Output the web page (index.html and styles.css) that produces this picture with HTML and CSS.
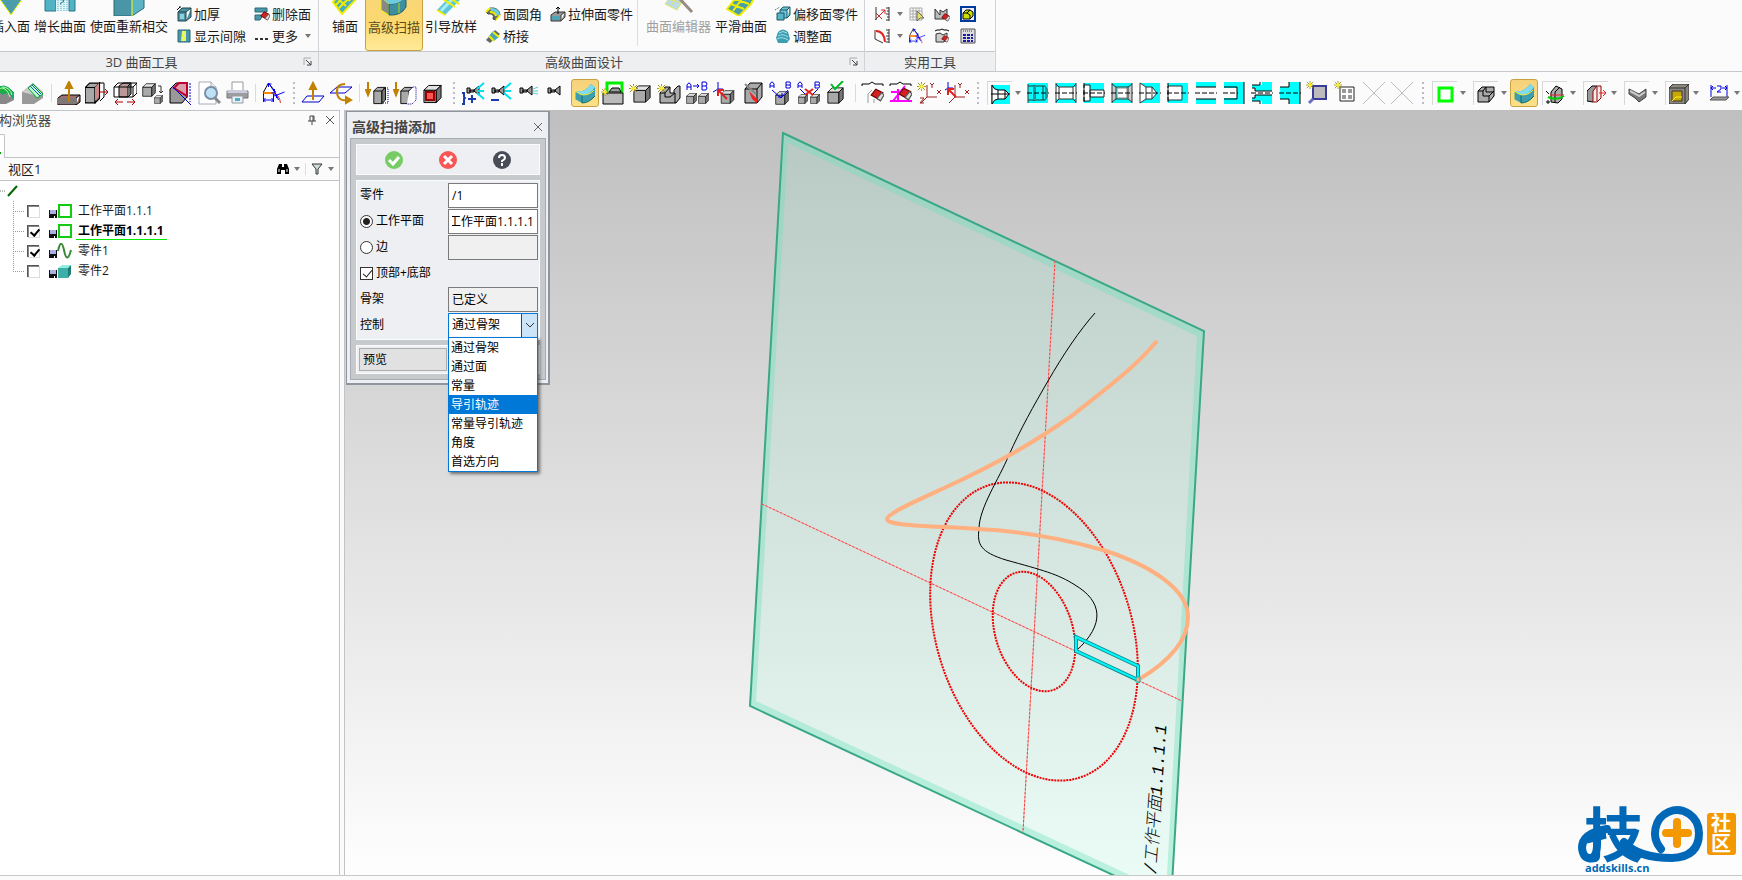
FILE: index.html
```html
<!DOCTYPE html>
<html lang="zh-CN">
<head>
    <meta charset="UTF-8">
    <meta name="viewport" content="width=device-width, initial-scale=1.0">
    <title>高级扫描添加</title>
    <link rel="stylesheet" href="styles.css">
</head>
<body>
    <!-- shared icon parts -->
    <svg class="sprite" width="0" height="0" aria-hidden="true">
        <symbol id="box" viewBox="0 0 20 20">
            <path d="M1 6h13v13H1z" fill="#a9a9a9" stroke="#000"/>
            <path d="M1 6l5-5h13l-5 5z" fill="#e2e2e2" stroke="#000"/>
            <path d="M14 6l5-5v13l-5 5z" fill="#777" stroke="#000"/>
        </symbol>
        <symbol id="tall" viewBox="0 0 20 20">
            <path d="M2 5l4-4h9l-4 4v14H2z" fill="#a9a9a9" stroke="#000"/>
            <path d="M11 5l4-4v14l-4 4z" fill="#777" stroke="#000"/>
            <path d="M2 5h9" stroke="#000"/>
        </symbol>
        <symbol id="star" viewBox="0 0 10 10">
            <path d="M5 0v10M0 5h10M1 1l8 8M9 1L1 9" stroke="#8a8a20" fill="none"/>
            <path d="M5 2v6M2 5h6" stroke="#ffee30" stroke-width="2"/>
        </symbol>
        <symbol id="sweep" viewBox="0 0 24 24">
            <path d="M2 10q10 2 16-7l4 3v9q-6 7-13 7l-7-4z" fill="#3f9db0"/>
            <path d="M2 10q10 2 16-7l4 3q-5 8-13 8z" fill="#7fdcec"/>
            <path d="M2 10l7 4q8 0 12-5M2 10v8" fill="none" stroke="#ffee30"/>
            <path d="M9 14v8q7 0 13-7" fill="none" stroke="#107060"/>
        </symbol>
        <symbol id="eraser" viewBox="0 0 12 12">
            <path d="M1 6l4-5 6 3-3 6z" fill="#d42020" stroke="#600"/>
            <path d="M6 9l4-5 2 2-3 5z" fill="#ddd" stroke="#555"/>
        </symbol>
        <symbol id="lamp" viewBox="0 0 24 24">
            <path d="M3 10h3v5H3zM6 12h4v2H6zM10 12l5-4v9l-5-4z" fill="#999" stroke="#000"/>
        </symbol>
        <symbol id="angle" viewBox="0 0 22 22">
            <path d="M1 20V10L6 1l7 9" fill="none" stroke="#000"/>
            <path d="M1 11h9q7 1 8 10" stroke="#c33" fill="none"/>
            <path d="M1 11h11" stroke="#f80" stroke-width="2"/>
            <path d="M12 14l10-4M12 9l4 9M1 20v-7M11 20v-8M1 18h10M3 16l-2 2 2 2M9 16l2 2-2 2M6 1l6 9M6 5V2h3M12 7v4H9M14 16v-3h-3" stroke="#00f" fill="none"/>
        </symbol>
        <symbol id="caret" viewBox="0 0 6 4"><path d="M0 0h6L3 4z" fill="#777"/></symbol>
        <symbol id="launch" viewBox="0 0 9 9">
            <path d="M1 8V1h7" fill="none" stroke="#aaa"/><path d="M3 3l5 5M8 4v4H4" fill="none" stroke="#444"/>
        </symbol>
        <symbol id="disk" viewBox="0 0 8 8">
            <path d="M0 0h8v8H0z" fill="#111"/><path d="M1 0h6v4H1z" fill="#aab0e0"/><path d="M5 6h1v2H5z" fill="#fff"/>
        </symbol>
    </svg>

    <div class="app">
        <header class="ribbon">
            <section class="group group-surface">
                <div class="group-body">
                    <button class="large cut">
                        <svg class="icon-lg" viewBox="0 0 32 32"><path d="M4 14h24L16 31z" fill="#4b9dac" stroke="#ff0"/></svg>
                        <span>插入面</span>
                    </button>
                    <button class="large">
                        <svg class="icon-lg" viewBox="0 0 32 32"><path d="M1 6h11v21H1zM25 6h6v21h-6z" fill="#52b2c6" stroke="#267888"/><path d="M12 6h12v21H12z" fill="#dff4f8"/><path d="M14 10v17M17 10v17M20 10v17M23 10v17" stroke="#52b2c6" stroke-dasharray="1 1"/><path d="M16 14l4 3-4 3" fill="none" stroke="#267888"/></svg>
                        <span>增长曲面</span>
                    </button>
                    <button class="large">
                        <svg class="icon-lg" viewBox="0 0 32 32"><path d="M1 4h18v28H1z" fill="#4b96a6"/><path d="M19 4h12v20l-12 8z" fill="#5ab4c6"/><path d="M1 4v28h18l12-8V4" fill="none" stroke="#2a6875"/><path d="M19 4v28" stroke="#ff0"/></svg>
                        <span>使面重新相交</span>
                    </button>
                    <div class="small-col">
                        <button class="small"><svg class="icon-sm" viewBox="0 0 16 16"><path d="M2 8h13v8H2z" fill="#a8d4de" stroke="#4b96a6"/></svg></button>
                        <button class="small"><svg class="icon-sm" viewBox="0 0 16 16"><path d="M2 6h8v9H2zM2 6l4-4h9l-5 4M10 15l5-4V2" fill="#4b96a6" stroke="#23424a"/><path d="M4 8h4v5H4z" fill="#8fd0dc"/><path d="M1 4l3-3M3 1h2" stroke="#000"/></svg>加厚</button>
                        <button class="small"><svg class="icon-sm" viewBox="0 0 16 16"><path d="M2 2h12v12H2z" fill="#4b96a6" stroke="#2a6875"/><path d="M6 3h4v10H5z" fill="#c6e9ef"/><path d="M8 3L7 8l1 2-1 3" stroke="#ff0" stroke-width="2" fill="none"/></svg>显示间隙</button>
                    </div>
                    <div class="small-col">
                        <button class="small"><svg class="icon-sm" viewBox="0 0 16 16"><path d="M1 2h12v4H1zM1 9h8l-3 5H1z" fill="#4b96a6" stroke="#2a6875"/><use href="#eraser" x="6" y="5" width="10" height="10"/></svg>删除面</button>
                        <button class="small"><svg class="icon-sm" viewBox="0 0 16 16"><path d="M1 10h3v2H1zM6 10h3v2H6zM11 10h3v2h-3z" fill="#333"/></svg>更多 <svg class="caret"><use href="#caret"/></svg></button>
                    </div>
                </div>
                <div class="group-title"><span>3D 曲面工具</span><svg class="launch"><use href="#launch"/></svg></div>
            </section>

            <section class="group group-advanced">
                <div class="group-body">
                    <button class="large first">
                        <svg class="icon-lg" viewBox="0 0 32 32"><path d="M4 18l12-14 14 8-17 18z" fill="#4baabb"/><path d="M4 18l12-14 14 8-17 18zM7 21L20 6M10 24L25 9M8 14l9 8M12 10l9 7" fill="none" stroke="#ee0" stroke-width="2"/></svg>
                        <span>铺面</span>
                    </button>
                    <button class="large active">
                        <svg class="icon-lg" viewBox="0 0 32 32"><path d="M3 12l8 7v11l-8-5z" fill="#888" stroke="#ee0"/><path d="M11 19q10 1 17-8v11q-5 9-17 8z" fill="#3f8fa0" stroke="#176070"/><path d="M3 12q12 0 20-8l5 7q-6 9-17 8z" fill="#6ccbdc"/><path d="M21 18v10" stroke="#ad0"/></svg>
                        <span>高级扫描</span>
                    </button>
                    <button class="large">
                        <svg class="icon-lg" viewBox="0 0 32 32"><path d="M2 26L24 3l8 6L10 31z" fill="#5cc6da"/><path d="M6 27L26 6" stroke="#a8ecf5" stroke-width="3"/><path d="M2 26l8 5M8 15l12 8M12 12l12 8" stroke="#ee0" stroke-width="2"/></svg>
                        <span>引导放样</span>
                    </button>
                    <div class="small-col">
                        <button class="small"><svg class="icon-sm" viewBox="0 0 16 16"><path d="M1 6l4-4q9-1 10 7l-4 5-3-1q2-6-5-5z" fill="#666" stroke="#444"/><path d="M5 2q9-1 10 7l-4 1q0-5-5-5z" fill="#6ccbdc"/><path d="M1 6l4-4M11 14l4-5M5 6q5 0 6 4" stroke="#ee0" stroke-width="2" fill="none"/></svg>面圆角</button>
                        <button class="small"><svg class="icon-sm" viewBox="0 0 16 16"><path d="M1 12l4 3 10-9-5-4z" fill="#666"/><path d="M4 8l5 5 5-4-6-6z" fill="#4ba5b5"/><path d="M4 8l5 5M8 4l6 5" stroke="#ee0" stroke-width="2"/></svg>桥接</button>
                    </div>
                    <div class="small-col">
                        <button class="small"><svg class="icon-sm" viewBox="0 0 16 16"><path d="M1 9l4-3h10l-4 3v6H1zM11 15l4-4V6" fill="#999" stroke="#333"/><path d="M2 10h8v4H2z" fill="#4ba5b5"/><path d="M8 8V1M6 3l2-2 2 2" stroke="#000" fill="none"/></svg>拉伸面零件</button>
                        <button class="small"></button>
                    </div>
                    <div class="divider"></div>
                    <button class="large" disabled>
                        <svg class="icon-lg" viewBox="0 0 32 32"><path d="M2 20L12 6l12 4-10 16z" fill="#b8dde6"/><path d="M2 20L12 6l12 4-10 16zM8 22l8-14M5 15l13 4" stroke="#e8e060" fill="none"/><path d="M15 13l14 15" stroke="#998b80" stroke-width="3"/></svg>
                        <span>曲面编辑器</span>
                    </button>
                    <button class="large">
                        <svg class="icon-lg" viewBox="0 0 32 32"><path d="M2 25L17 6l14 5-5 9-12 12z" fill="#4b9dac"/><path d="M2 25L17 6l14 5-5 9-12 12zM8 27L22 8M6 20l13 5M10 15l14 5" stroke="#ee0" stroke-width="2" fill="none"/></svg>
                        <span>平滑曲面</span>
                    </button>
                    <div class="small-col">
                        <button class="small"><svg class="icon-sm" viewBox="0 0 16 16"><path d="M1 8h11v8H1z" fill="#4b96a6"/></svg></button>
                        <button class="small"><svg class="icon-sm" viewBox="0 0 16 16"><path d="M5 4h7v8H5zM5 4l3-3h7l-3 3M12 12l3-3V1" fill="#6cc4d4" stroke="#1d5866"/><path d="M2 7h7v7H2z" fill="#58b4c6" stroke="#1d5866"/><path d="M0 4l5-3" stroke="#1d5866" stroke-dasharray="1 1"/></svg>偏移面零件</button>
                        <button class="small"><svg class="icon-sm" viewBox="0 0 16 16"><path d="M3 4q5-5 10 0l2 7-3 4H3l-2-5z" fill="#3f9db0"/><path d="M4 5q4-3 8 0M3 8q5-3 10 1M2 11q5-3 11 1" stroke="#a0e4ee" fill="none"/></svg>调整面</button>
                    </div>
                </div>
                <div class="group-title"><span>高级曲面设计</span><svg class="launch"><use href="#launch"/></svg></div>
            </section>

            <section class="group group-utils">
                <div class="group-body">
                    <div class="util-grid">
                        <button class="small"></button>
                        <button class="small"></button>
                        <button class="small"><svg class="icon-sm" viewBox="0 0 16 16"><path d="M6 10l3 5" stroke="#00c" stroke-width="3"/></svg></button>
                        <button class="small"><svg class="icon-sm" viewBox="0 0 16 16"><path d="M1 4h14v11H1z" fill="#ddd" stroke="#00c"/></svg></button>

                        <button class="small"><svg class="icon-sm" viewBox="0 0 16 16"><path d="M1 14L11 4M7 4h4v4M2 7l6 6" stroke="#d22" fill="none"/><path d="M2 1v13" stroke="#333"/><path d="M15 1v14M12 2h3M13 5h2M12 8h3M13 11h2M12 14h3" stroke="#333" fill="none"/></svg><svg class="caret"><use href="#caret"/></svg></button>
                        <button class="small"><svg class="icon-sm" viewBox="0 0 16 16"><path d="M1 2h12v12H1zM1 5h12M1 8h12M1 11h12M4 2v12M7 2v12M10 2v12" stroke="#aaa" fill="#fff"/><path d="M8 5v10l3-3h4z" fill="#e8e060" stroke="#666"/></svg></button>
                        <button class="small"><svg class="icon-sm" viewBox="0 0 16 16"><path d="M1 3v10h9l3-4V3l-4 3-3-2v5z" fill="#bbb" stroke="#333"/><use href="#eraser" x="7" y="7" width="9" height="9"/></svg></button>
                        <button class="small"><svg class="icon-sm" viewBox="0 0 16 16"><path d="M1 1h14v14H1z" fill="#eef" stroke="#003a9a" stroke-width="2"/><path d="M3 7l3-3h4l3 2v4l-3 3H3z" fill="#cde000" stroke="#000"/><path d="M3 7h4l3 2v4M7 7l3-3" fill="none" stroke="#000"/></svg></button>

                        <button class="small"><svg class="icon-sm" viewBox="0 0 16 16"><path d="M2 3q8 0 9 11" stroke="#d22" stroke-width="2" fill="none"/><path d="M1 2v9l8 4" stroke="#333" fill="none"/><path d="M15 1v14M12 2h3M13 5h2M12 8h3M13 11h2M12 14h3" stroke="#333" fill="none"/></svg><svg class="caret"><use href="#caret"/></svg></button>
                        <button class="small"><svg class="icon-sm"><use href="#angle" width="16" height="16"/></svg></button>
                        <button class="small"><svg class="icon-sm" viewBox="0 0 16 16"><path d="M1 3l2-1h3l2-1 2 1h3l2 1" fill="none" stroke="#000"/><path d="M2 6v8h8l3-4V5L9 7 6 5z" fill="#ccc" stroke="#333"/><use href="#eraser" x="7" y="7" width="8" height="8"/></svg></button>
                        <button class="small"><svg class="icon-sm" viewBox="0 0 16 16"><path d="M1 1h14v14H1z" fill="#ddd" stroke="#555"/><path d="M3 3h10" stroke="#333" stroke-dasharray="1 1"/><path d="M3 7h10M3 10h10M3 13h10" stroke="#1a1ab0" stroke-width="2" stroke-dasharray="3 1"/></svg></button>
                    </div>
                </div>
                <div class="group-title"><span>实用工具</span></div>
            </section>
        </header>

        <nav class="toolbar">
            <button class="tool cut-left"><svg class="icon" viewBox="0 0 24 24"><path d="M2 12l8-6 11 5v8l-8 4H2z" fill="#888"/><path d="M2 9q9-9 18 2v6q-4-8-10-4z" fill="#20b040" stroke="#0a6"/><path d="M5 8q8-4 12 8M9 6q8 0 10 8" stroke="#b0ffb0" fill="none"/></svg></button>
            <button class="tool"><svg class="icon" viewBox="0 0 24 24"><path d="M1 11L12 2l10 9v6l-9 6H1z" fill="#999"/><path d="M1 11L12 2l10 9-9 3z" fill="#ccc"/><path d="M7 7l5-4 10 10-6 4z" fill="#b8ffc8" stroke="#00a030"/><path d="M9 5l10 10M11 4l9 9" stroke="#2050c0"/></svg></button>
            <span class="sep"></span>
            <button class="tool"><svg class="icon" viewBox="0 0 24 24"><path d="M1 17l4-3h18l-4 3v7H1zM19 24l4-3v-7" fill="#a07070" stroke="#000"/><path d="M1 17h18v6H1z" fill="#807878"/><path d="M12 21V3M9 7l3-6 3 6z" stroke="#c08000" stroke-width="2" fill="#fc3"/></svg></button>
            <button class="tool"><svg class="icon" viewBox="0 0 24 24"><use href="#tall" x="-2" y="1" width="22" height="22"/><path d="M10 6l4-4v14l-4 4z" fill="#c88"/><path d="M14 2h5v14l-4 4" fill="none" stroke="#000"/><path d="M15 11h8M20 8l3 3-3 3" stroke="#b00000" fill="none"/></svg></button>
            <button class="tool"><svg class="icon" viewBox="0 0 24 24"><path d="M6 5l4-3h8l-3 3v11H6z" fill="#b99" stroke="#000"/><path d="M15 5l3-3v11l-3 3" fill="#777" stroke="#000"/><path d="M1 6l4-4h19l-4 4zM1 6v10h19V6M20 16l4-4V2" fill="none" stroke="#000"/><path d="M2 21h8M14 21h8M5 18l-3 3 3 3M19 18l3 3-3 3" stroke="#b00000" fill="none"/></svg></button>
            <button class="tool"><svg class="icon" viewBox="0 0 24 24"><use href="#box" x="1" y="2" width="14" height="14"/><use href="#box" x="13" y="14" width="9" height="9"/><path d="M17 5h3v7M18 10l2 2 2-2" stroke="#333" fill="none"/></svg></button>
            <button class="tool"><svg class="icon" viewBox="0 0 24 24"><path d="M1 8l6-6h11v14l-5 6H1z" fill="#999" stroke="#000"/><path d="M5 7l5-5h8v13z" fill="#d8a0a8" stroke="#c00030" stroke-width="2"/><path d="M3 5l19 19" stroke="#00c"/><path d="M21 2v19" stroke="#00c" stroke-dasharray="2 1"/></svg></button>
            <button class="tool"><svg class="icon" viewBox="0 0 24 24"><path d="M2 1h12l5 5v17H2z" fill="#fff" stroke="#aab"/><path d="M14 1v5h5" fill="#eee" stroke="#aab"/><circle cx="14" cy="12" r="6" fill="#bfe0f5" stroke="#7a8fa5" stroke-width="2"/><path d="M18 17l5 5" stroke="#888" stroke-width="3"/></svg></button>
            <button class="tool"><svg class="icon" viewBox="0 0 24 24"><path d="M7 1h11v9H7z" fill="#fff" stroke="#999"/><path d="M2 10h21v7H2z" fill="#9a9da2" stroke="#777"/><path d="M3 9h18l2 3H2z" fill="#ccd"/><path d="M7 15h11v7H7z" fill="#e6f3ff" stroke="#999"/><path d="M10 17h5v3h-5z" fill="#5ab"/></svg></button>
            <span class="sep"></span>
            <button class="tool"><svg class="icon"><use href="#angle" x="1" y="1" width="23" height="22"/></svg></button>
            <span class="grip"></span>
            <button class="tool"><svg class="icon" viewBox="0 0 24 24"><path d="M1 21l5-6h17l-5 6z" fill="none" stroke="#00c"/><path d="M12 19V4M9 8l3-6 3 6z" stroke="#c08000" stroke-width="2" fill="#fc3"/></svg></button>
            <button class="tool"><svg class="icon" viewBox="0 0 24 24"><path d="M1 12l7-6h15l-7 6z" fill="none" stroke="#00c"/><path d="M16 3q-9 0-8 9t12 7M17 16l5 3-5 3z" fill="none" stroke="#c08000" stroke-width="2"/></svg></button>
            <span class="sep"></span>
            <button class="tool"><svg class="icon" viewBox="0 0 24 24"><use href="#tall" x="7" y="5" width="18" height="19"/><path d="M18 7h5v15h-5" fill="none" stroke="#009" stroke-dasharray="1 1"/><path d="M3 1v12M1 9l2 5 2-5z" stroke="#c08000" stroke-width="2" fill="#fc3"/></svg></button>
            <button class="tool"><svg class="icon" viewBox="0 0 24 24"><use href="#tall" x="6" y="5" width="18" height="19"/><path d="M16 10l4-4h3v13l-4 4h-5" fill="#fff" stroke="#009" stroke-dasharray="1 1"/><path d="M3 1v12M1 9l2 5 2-5z" stroke="#c08000" stroke-width="2" fill="#fc3"/></svg></button>
            <button class="tool"><svg class="icon" viewBox="0 0 24 24"><use href="#box" x="2" y="3" width="19" height="20"/><path d="M5 11h8v8H5z" fill="#f55" stroke="#900" stroke-width="2"/></svg></button>
            <span class="grip"></span>
            <button class="tool"><svg class="icon" viewBox="0 0 24 24"><use href="#lamp" x="3" y="-3" width="24" height="24"/><path d="M16 8l7-6M17 10h6M16 12l7 6" stroke="#00e0f0" stroke-width="2"/><path d="M1 12h2v4l1 1-1 1v5H1M7 18h8M11 14v8" stroke="#1a3ab0" stroke-width="2" fill="none"/></svg></button>
            <button class="tool"><svg class="icon" viewBox="0 0 24 24"><use href="#lamp" x="0" y="-3" width="24" height="24"/><path d="M15 8l7-6M16 10h6M15 12l7 6" stroke="#00e0f0" stroke-width="2"/><path d="M2 19h8" stroke="#1a3ab0" stroke-width="2"/></svg></button>
            <button class="tool"><svg class="icon" viewBox="0 0 24 24"><use href="#lamp" x="0" y="-3" width="24" height="24"/><path d="M16 8l5-2M16 10h5M16 12l5 1" stroke="#50d0d8"/></svg></button>
            <button class="tool"><svg class="icon"><use href="#lamp" x="0" y="-3" width="24" height="24"/></svg></button>
            <button class="tool active"><svg class="icon"><use href="#sweep" width="24" height="24"/></svg></button>
            <button class="tool"><svg class="icon" viewBox="0 0 24 24"><path d="M6 12V2h15v10" fill="none" stroke="#0e0" stroke-width="3"/><path d="M2 12h20v11H2z" fill="#bbb" stroke="#000"/><path d="M8 11l3-4h7l2 4z" fill="#999" stroke="#000"/><use href="#star" x="0" y="7" width="8" height="8"/></svg></button>
            <button class="tool"><svg class="icon"><use href="#box" x="4" y="4" width="18" height="18"/><use href="#star" x="0" y="3" width="9" height="9"/></svg></button>
            <button class="tool"><svg class="icon" viewBox="0 0 24 24"><path d="M3 12l5-6h5v6h4V9l4-4h2v12l-4 5H3z" fill="#aaa" stroke="#000"/><path d="M3 12h5v4h5l5-4M18 12v10M8 12l5-6" fill="none" stroke="#000"/><use href="#star" x="0" y="3" width="9" height="9"/></svg></button>
            <button class="tool"><svg class="icon" viewBox="0 0 24 24"><use href="#box" x="1" y="12" width="11" height="11"/><use href="#box" x="13" y="12" width="11" height="11"/><path d="M2 9V4q2-4 4 0v5M2 6h4M17 1v8h4q2-2 0-4 2-2 0-4zM17 5h4M8 5h6M12 3l2 2-2 2" stroke="#00d" fill="none"/></svg></button>
            <button class="tool"><svg class="icon" viewBox="0 0 24 24"><use href="#box" x="6" y="9" width="17" height="14"/><path d="M5 1v7l-5 3M5 8h5" stroke="#00d" fill="none"/><path d="M14 18L6 10M5 15V9h6" stroke="#d22" stroke-width="2" fill="none"/></svg></button>
            <button class="tool"><svg class="icon" viewBox="0 0 24 24"><path d="M4 8l5-6h12v14l-5 6H4z" fill="#aaa" stroke="#000"/><path d="M16 8l5-6M4 8h12v14" stroke="#000" fill="none"/><path d="M8 10l8 8v4l-5-4z" fill="#e22"/><path d="M4 3l11 10" stroke="#888" stroke-width="2"/></svg></button>
            <button class="tool"><svg class="icon" viewBox="0 0 24 24"><use href="#box" x="5" y="10" width="16" height="14"/><path d="M1 7V3q2-4 4 0v4M1 5h4M17 1v6h4q1-2 0-3 1-2 0-3zM17 4h4M3 9l9 8 7-8M9 16h4v-4" stroke="#00d" fill="none"/></svg></button>
            <button class="tool"><svg class="icon" viewBox="0 0 24 24"><use href="#box" x="1" y="13" width="10" height="10"/><use href="#box" x="13" y="13" width="10" height="10"/><path d="M1 7V3q2-4 4 0v4M1 5h4M18 1v6h4q1-2 0-3 1-2 0-3zM18 4h4M3 8l5 5M21 8l-5 5" stroke="#00d" fill="none"/><path d="M8 8l8 6M16 8l-8 6" stroke="#d22" stroke-width="2"/></svg></button>
            <button class="tool"><svg class="icon" viewBox="0 0 24 24"><use href="#box" x="2" y="6" width="17" height="17"/><path d="M6 3l4 5L18 0" stroke="#0b2" stroke-width="2" fill="none"/></svg></button>
            <span class="sep"></span>
            <button class="tool"><svg class="icon" viewBox="0 0 24 24"><path d="M1 5V3h7l3-2 3 2h8v2" stroke="#000" fill="none"/><use href="#eraser" x="9" y="7" width="14" height="14"/><path d="M7 22v-9l4-4M13 22v-4" stroke="#999" fill="none"/></svg></button>
            <button class="tool"><svg class="icon" viewBox="0 0 24 24"><path d="M1 5V3h7l3-2 3 2h8v2" stroke="#000" fill="none"/><path d="M1 20h22M4 20l12-15M2 11h10M9 8v12" stroke="#f0f" stroke-width="2" fill="none"/><use href="#eraser" x="9" y="6" width="14" height="14"/></svg></button>
            <button class="tool"><svg class="icon" viewBox="0 0 24 24"><path d="M10 4v12h10M10 16l-6 6M13 2l2 2 2-2M15 4v3M20 9l4 4M24 9l-4 4M3 17h4l-4 5h4" stroke="#a02020" fill="none"/><use href="#star" x="0" y="1" width="9" height="9"/></svg></button>
            <button class="tool"><svg class="icon" viewBox="0 0 24 24"><path d="M10 4v12h10M10 16l-6 6M13 2l2 2 2-2M15 4v3M20 9l4 4M24 9l-4 4" stroke="#a02020" fill="none"/><path d="M3 1v6l-3 2M3 7h5" stroke="#00d" fill="none"/><path d="M11 16L4 9M3 14V8h6" stroke="#d22" stroke-width="2" fill="none"/></svg></button>
            <span class="grip"></span>
            <button class="split"><span class="frame"><svg class="icon-sec" viewBox="0 0 20 20"><path d="M0 1h19v19H0z" fill="#0ff"/><path d="M1 1q2 5 6 5h7l4 4-4 5H7q-4 0-6 5z" fill="#fff" stroke="#000"/><path d="M0 10h19M7 6v9M14 6v9" stroke="#000"/></svg></span><svg class="caret"><use href="#caret"/></svg></button>
            <button class="tool"><svg class="icon" viewBox="0 0 24 24"><path d="M2 2h20v20H2z" fill="#0ff"/><path d="M2 3v19M2 5h17l2 3v8l-2 3H2M8 4v16M17 5v14" fill="none" stroke="#333"/><path d="M7 5h3v14H7zM19 5l2 3v8l-2 3z" fill="#1a9a9a"/><path d="M1 12h22" stroke="#000" stroke-dasharray="5 2"/></svg></button>
            <button class="tool"><svg class="icon" viewBox="0 0 24 24"><path d="M2 2h20v4H2zM2 18h20v4H2z" fill="#0ff"/><path d="M5 6h14v12H5zM5 6L2 3M19 6l3-3M5 18l-3 3M19 18l3 3M2 2v20M22 2v20" fill="#fff" stroke="#333"/><path d="M1 12h22" stroke="#000" stroke-dasharray="5 2"/></svg></button>
            <button class="tool"><svg class="icon" viewBox="0 0 24 24"><path d="M2 2h20v20H2z" fill="#0ff"/><path d="M2 4h6v16H2zM8 9h14v7H8z" fill="#fff" stroke="#222"/><path d="M1 12h22M2 2v20" stroke="#000" stroke-dasharray="5 2"/></svg></button>
            <button class="tool"><svg class="icon" viewBox="0 0 24 24"><path d="M2 2h20v20H2z" fill="#0ff"/><path d="M2 4l4 3v11l-4 3zM22 4l-4 3v11l4 3z" fill="#ccc"/><path d="M2 3l4 3h12l4-3M2 21l4-3h12l4 3M2 2v20M22 2v20M6 6v12M18 6v12" fill="none" stroke="#333"/><path d="M7 7h10v10H7z" fill="#fff" stroke="#888"/><path d="M1 12h22" stroke="#000" stroke-dasharray="5 2"/></svg></button>
            <button class="tool"><svg class="icon" viewBox="0 0 24 24"><path d="M2 2h20v20H2z" fill="#0ff"/><path d="M2 2v20l6-4h6l5-6-5-6H8z" fill="#fff" stroke="#333"/><path d="M8 6v12M14 6v12" stroke="#333"/><path d="M1 12h22" stroke="#000" stroke-dasharray="5 2"/></svg></button>
            <button class="tool"><svg class="icon" viewBox="0 0 24 24"><path d="M2 2h20v20H2z" fill="#0ff"/><path d="M2 5h14v14H2z" fill="#fff" stroke="#333"/><path d="M1 12h22M2 2v20" stroke="#000" stroke-dasharray="5 2"/></svg></button>
            <button class="tool"><svg class="icon" viewBox="0 0 24 24"><path d="M2 1h20v5H2zM2 18h20v5H2z" fill="#0ff"/><path d="M2 6h20M2 18h20" stroke="#000"/><path d="M1 12h22" stroke="#000" stroke-dasharray="5 2"/></svg></button>
            <button class="tool"><svg class="icon" viewBox="0 0 24 24"><path d="M2 1h20v22H2z" fill="#0ff"/><path d="M0 7h15v10H0z" fill="#fbfbfb"/><path d="M2 6h13v12H2M22 1v22" fill="none" stroke="#000"/><path d="M1 12h15" stroke="#000" stroke-dasharray="5 2"/></svg></button>
            <button class="tool"><svg class="icon" viewBox="0 0 24 24"><path d="M2 4h10V1h10v9H5V7H2zM2 20h10v3h10v-9H5v3H2z" fill="#0ff"/><path d="M2 4h8V1M22 10H5V7H2M2 20h8v3M2 17h3v-3h17" fill="none" stroke="#000"/><path d="M1 12h22" stroke="#000" stroke-dasharray="5 2"/></svg></button>
            <button class="tool"><svg class="icon" viewBox="0 0 24 24"><path d="M2 6h9V1h11v22H11v-5H2z" fill="#0ff"/><path d="M2 6h9V1M2 18h9v5M22 1v22" fill="none" stroke="#000"/><path d="M1 12h22" stroke="#000" stroke-dasharray="5 2"/></svg></button>
            <button class="tool"><svg class="icon" viewBox="0 0 24 24"><path d="M7 5h13v13H7z" fill="#bbb" stroke="#3a3a9a" stroke-width="2"/><path d="M7 18l-4 4" stroke="#6a70c0" stroke-width="3"/><use href="#star" x="0" y="0" width="8" height="8"/></svg></button>
            <button class="tool"><svg class="icon" viewBox="0 0 24 24"><path d="M6 6h14v14H6z" fill="#fff" stroke="#222"/><path d="M8 8h4v4H8zM14 8h4v4h-4zM8 14h4v4H8zM14 14h4v4h-4z" fill="#999"/><use href="#star" x="0" y="0" width="8" height="8"/></svg></button>
            <button class="tool" disabled><svg class="icon" viewBox="0 0 24 24"><path d="M1 1l22 22M23 1L1 23" stroke="#bbb"/></svg></button>
            <button class="tool" disabled><svg class="icon" viewBox="0 0 24 24"><path d="M1 1l22 22M23 1L1 23" stroke="#bbb"/></svg></button>
            <span class="grip"></span>
            <button class="split"><span class="frame"><svg class="icon-sec" viewBox="0 0 20 20"><path d="M3 4h13v13H3z" fill="#fff" stroke="#0f0" stroke-width="3"/></svg></span><svg class="caret"><use href="#caret"/></svg></button>
            <button class="split"><span class="frame"><svg class="icon-sec" viewBox="0 0 20 20"><path d="M1 7l4-4h12v9l-5 6H1z" fill="#aaa" stroke="#000"/><path d="M1 7h5v5h6v6M6 7l3-4M12 12l5-5M9 8h7M9 8V3" fill="none" stroke="#000"/></svg></span><svg class="caret"><use href="#caret"/></svg></button>
            <button class="tool active"><svg class="icon"><use href="#sweep" width="24" height="24"/></svg></button>
            <button class="split"><span class="frame"><svg class="icon-sec" viewBox="0 0 20 20"><path d="M5 18V8l5-6 6 3v10l-4 4z" fill="#aaa" stroke="#000"/><path d="M9 18V8l5-5" stroke="#000" fill="none"/><path d="M4 11h14" stroke="#e22"/><path d="M2 13q8 4 16-1" stroke="#0c0" stroke-width="2" fill="none"/><path d="M0 7l3 3M2 16v4M0 18h4" stroke="#000"/></svg></span><svg class="caret"><use href="#caret"/></svg></button>
            <button class="split"><span class="frame"><svg class="icon-sec" viewBox="0 0 20 20"><path d="M0 17V7l5-5h5v11l-4 5z" fill="#999" stroke="#000"/><path d="M6 18V7l4-5h4v12l-4 4z" fill="#fbeaea" stroke="#900"/><path d="M10 3v14" stroke="#900"/><path d="M12 9h7M16 6l3 3-3 3" stroke="#e22" fill="none"/></svg></span><svg class="caret"><use href="#caret"/></svg></button>
            <button class="split"><span class="frame"><svg class="icon-sec" viewBox="0 0 20 20"><path d="M1 5l6 3 4 2 7-5v8l-7 5-4-4-6-4z" fill="#777" stroke="#444"/><path d="M2 7q6 3 9 5l6-4" stroke="#ccc" stroke-width="2" fill="none"/></svg></span><svg class="caret"><use href="#caret"/></svg></button>
            <button class="split"><span class="frame"><svg class="icon-sec" viewBox="0 0 20 20"><path d="M0 4l4-4h16v15l-4 5H0z" fill="#8b8680" stroke="#333"/><path d="M0 4h16v16M16 4l4-4" stroke="#333" fill="none"/><path d="M3 7h10v10H3z" fill="#c8a800" stroke="#333"/><path d="M3 17l4-4h6" stroke="#fe3" fill="none"/></svg></span><svg class="caret"><use href="#caret"/></svg></button>
            <button class="split"><span class="frame plain"><svg class="icon-sec" viewBox="0 0 20 20"><path d="M1 1v12M17 1v12M1 4h5M12 4h5M3 2L1 4l2 2M15 2l2 2-2 2M7 2h4v3L7 8h4" stroke="#00d" fill="none"/><path d="M0 16l3-3h16l-3 3z" fill="#999" stroke="#555"/></svg></span><svg class="caret"><use href="#caret"/></svg></button>
        </nav>

        <main class="work">
            <aside class="browser">
                <div class="browser-title">
                    <h2>构浏览器</h2>
                    <svg class="pin" viewBox="0 0 10 10"><path d="M1 6h8M3 6V1h4v5M5 6v4M6 1v5" fill="none" stroke="#444"/></svg>
                    <svg class="close" viewBox="0 0 8 8"><path d="M0 0l8 8M8 0L0 8" stroke="#555"/></svg>
                </div>
                <div class="tabs"><span class="tab"></span></div>
                <div class="view-bar">
                    <span>视区1</span>
                    <svg class="find" viewBox="0 0 12 12"><path d="M2 1h3v3h2V1h3l2 5v5H8V7H4v4H0V6z" fill="#000"/><path d="M2 6v3M10 6v3" stroke="#fff"/></svg>
                    <svg class="caret"><use href="#caret"/></svg>
                    <span class="bar-sep"></span>
                    <svg class="find" viewBox="0 0 12 12"><path d="M1 1h10L7 6v5H5V6z" fill="#cdd" stroke="#333"/></svg>
                    <svg class="caret"><use href="#caret"/></svg>
                </div>
                <div class="tree">
                    <div class="root"><svg viewBox="0 0 18 12"><path d="M0 6h5" stroke="#777" stroke-dasharray="1 1"/><path d="M8 11L17 1" stroke="#060" stroke-width="2"/></svg></div>
                    <ul>
                        <li>
                            <input type="checkbox" id="wp1">
                            <svg class="node" viewBox="0 0 24 16"><use href="#disk" x="1" y="7" width="8" height="8"/><path d="M11 2h12v12H11z" fill="#fff" stroke="#1c1" stroke-width="2"/></svg>
                            <label for="wp1">工作平面1.1.1</label>
                        </li>
                        <li>
                            <input type="checkbox" id="wp2" checked>
                            <svg class="node" viewBox="0 0 24 16"><use href="#disk" x="1" y="7" width="8" height="8"/><path d="M11 2h12v12H11z" fill="#fff" stroke="#1c1" stroke-width="2"/></svg>
                            <label for="wp2" class="current">工作平面1.1.1.1</label>
                        </li>
                        <li>
                            <input type="checkbox" id="part1" checked>
                            <svg class="node" viewBox="0 0 24 16"><use href="#disk" x="1" y="7" width="8" height="8"/><path d="M10 8Q13-6 16 7Q19 22 23 7" fill="none" stroke="#3a8a3a" stroke-width="2"/></svg>
                            <label for="part1">零件1</label>
                        </li>
                        <li>
                            <input type="checkbox" id="part2">
                            <svg class="node" viewBox="0 0 24 16"><use href="#disk" x="1" y="7" width="8" height="8"/><path d="M10 5h10v10H10z" fill="#3cb0a8"/><path d="M10 5l4-3h9l-3 3z" fill="#8ff0dc"/><path d="M20 5l3-3v9l-3 4z" fill="#1e7c78"/></svg>
                            <label for="part2">零件2</label>
                        </li>
                    </ul>
                </div>
            </aside>

            <section class="viewport">
                <svg class="scene" viewBox="345 110 1397 765" preserveAspectRatio="xMinYMin slice">
                    <path class="plane-band" fill-rule="evenodd" d="M783 133L1204 331L1171 902L750 706ZM788 143L1197 336L1166 892L756 701Z"/>
                    <path class="plane-fill" d="M788 143L1197 336L1166 892L756 701Z"/>
                    <path class="plane-edge" d="M783 133L1204 331L1171 902L750 706Z"/>
                    <path class="axis" d="M1055 261L1023 832M762 504L1182 701"/>
                    <path class="axis dots" d="M1055 261L1023 832M762 504L1182 701"/>
                    <circle class="guide" r="1" transform="matrix(103.5 48.5 -8 141 1034 631.5)"/>
                    <circle class="guide" r="1" transform="matrix(41.2 19.5 -2.5 56.5 1034 631.5)"/>
                    <path class="spine" d="M1095 313C1079 331 1063 355 1048 381C1034 405 1020 430 1009 455C999 479 979 508 979 529C977 544 980 552 1006 560C1042 570 1058 574 1075 585C1102 601 1106 624 1076 651"/>
                    <path class="profile-edge" d="M1076 637L1138 666L1138 680L1076 651Z"/>
                    <path class="profile" d="M1076 637L1138 666L1138 680L1076 651Z"/>
                    <path class="track" d="M1156 342C1135 367 1113 383 1073 415C1036 441 1007 458 957 482C930 495 888 512 887 519C886 526 935 526 978 529C1020 531 1060 538 1103 550C1150 565 1188 589 1188 617C1188 643 1165 664 1138 680"/>
                    <path class="pick" d="M1136 677h4v5h-4z"/>
                    <text class="plane-name" transform="translate(1156 874) rotate(-86)">/工作平面1.1.1.1</text>
                </svg>

                <form class="dialog">
                    <div class="dialog-title">
                        <h3>高级扫描添加</h3>
                        <svg class="close" viewBox="0 0 8 8"><path d="M0 0l8 8M8 0L0 8" stroke="#666"/></svg>
                    </div>
                    <div class="dialog-body">
                        <div class="panel actions">
                            <button type="button"><svg viewBox="0 0 18 18"><circle cx="9" cy="9" r="9" fill="#77cc66"/><path d="M4 9l4 4 6-7" fill="none" stroke="#fff" stroke-width="3"/></svg></button>
                            <button type="button"><svg viewBox="0 0 18 18"><circle cx="9" cy="9" r="9" fill="#f85555"/><path d="M5 5l8 8M13 5l-8 8" stroke="#fff" stroke-width="3"/></svg></button>
                            <button type="button"><svg viewBox="0 0 18 18"><circle cx="9" cy="9" r="9" fill="#4a4c58"/><path d="M6 7q0-3 3-3t3 3q0 1-3 3v1M9 12v3" fill="none" stroke="#fff" stroke-width="2"/></svg></button>
                        </div>
                        <div class="panel fields">
                            <div class="row"><label for="part">零件</label><input type="text" id="part" value="/1"></div>
                            <div class="row"><label><input type="radio" name="ref" checked>工作平面</label><input type="text" class="scrolled" aria-label="工作平面" value="工作平面1.1.1.1"></div>
                            <div class="row"><label><input type="radio" name="ref">边</label><input type="text" aria-label="边" disabled></div>
                            <div class="row"><label><input type="checkbox" checked>顶部+底部</label></div>
                            <div class="row"><label for="bone">骨架</label><input type="text" id="bone" value="已定义" disabled></div>
                            <div class="row">
                                <label for="control">控制</label>
                                <div class="combo">
                                    <select id="control"><option>通过骨架</option><option>通过面</option><option>常量</option><option>导引轨迹</option><option>常量导引轨迹</option><option>角度</option><option>首选方向</option></select>
                                    <span class="combo-arrow"><svg viewBox="0 0 8 5"><path d="M0 0l4 4 4-4" fill="none" stroke="#333"/></svg></span>
                                    <ul class="options">
                                        <li>通过骨架</li>
                                        <li>通过面</li>
                                        <li>常量</li>
                                        <li class="hover">导引轨迹</li>
                                        <li>常量导引轨迹</li>
                                        <li>角度</li>
                                        <li>首选方向</li>
                                    </ul>
                                </div>
                            </div>
                        </div>
                        <div class="panel footer"><button type="button">预览</button></div>
                    </div>
                </form>

                <svg class="logo" viewBox="38 24 160 70">
                    <text class="logo-char" x="44" y="77">技</text>
                    <path d="M67 49Q42 53 42 68Q43 79 51 78Q58 76 57 58" class="logo-line"/>
                    <path d="M84 62Q98 78 132 78Q159 77 159 53A22 23 0 1 0 121 69" class="logo-line"/>
                    <path d="M137 42v22M126 53h22" class="logo-plus"/>
                    <rect x="167" y="33" width="29" height="42" rx="3" fill="#f39800"/>
                    <text class="logo-tag" x="171" y="51">社</text>
                    <text class="logo-tag" x="171" y="71">区</text>
                    <text class="logo-url" x="45" y="92">addskills.cn</text>
                </svg>
            </section>
        </main>
    </div>
</body>
</html>
```

FILE: styles.css
```css
* {
    box-sizing: border-box;
}
body {
    margin: 0;
    background: #fbfbfb;
    color: #1a1a1a;
    font: 12px/18px "Open Sans", "Noto Sans CJK SC", sans-serif;
    overflow: hidden;
}
button {
    font: inherit;
    color: inherit;
    background: none;
    border: 0;
    padding: 0;
    white-space: nowrap;
}
h2, h3, ul {
    margin: 0;
    padding: 0;
    list-style: none;
}
svg {
    display: block;
    flex: none;
}
.sprite {
    position: absolute;
}
.app {
    display: flex;
    flex-direction: column;
    height: 100vh;
    padding-bottom: 4px;
}
.caret {
    width: 6px;
    height: 4px;
}

/* ribbon */
.ribbon {
    display: flex;
    flex: none;
    border-bottom: 1px solid #c5c8cc;
    font-size: 13px;
}
.group {
    border-right: 1px solid #d0d3d7;
}
.group-surface {
    width: 319px;
}
.group-advanced {
    width: 546px;
}
.group-utils {
    width: 131px;
}
.group-body {
    display: flex;
    align-items: flex-end;
    gap: 4px;
    height: 51px;
    overflow: hidden;
}
.group-title {
    display: flex;
    align-items: center;
    height: 20px;
    padding-right: 6px;
    background: #edeff1;
    border-top: 1px solid #c5c8cc;
    color: #444;
}
.group-title span {
    flex: 1;
    text-align: center;
}
.group-surface .group-title span {
    padding-right: 20px;
}
.group-utils .group-title {
    padding-right: 0;
}
.launch {
    width: 9px;
    height: 9px;
}
.large {
    display: flex;
    flex-direction: column;
    flex: none;
    align-items: center;
    gap: 1px;
    height: 67px;
    padding-bottom: 16px;
}
.large.cut {
    margin-left: -9px;
}
.large.first {
    margin-left: 10px;
}
.large:disabled {
    color: #a0a0a0;
}
.large.active {
    padding-left: 2px;
    padding-right: 2px;
    margin-right: -2px;
    color: #5a4a20;
    background: linear-gradient(#f8d47a, #fbd96f 60%, #ffea9a);
    border: 1px solid #c8a040;
    border-radius: 3px;
}
.icon-lg {
    width: 32px;
    height: 32px;
}
.icon-sm {
    width: 16px;
    height: 16px;
}
.small-col {
    flex: none;
    padding: 0 0 4px 4px;
}
.small {
    display: flex;
    align-items: center;
    gap: 2px;
    height: 22px;
}
.small .caret {
    margin-left: 5px;
}
.divider {
    width: 1px;
    height: 46px;
    margin: 0 4px 5px 0;
    background: #dcdfe2;
}
.util-grid {
    display: grid;
    grid-template-columns: 35px 25px 26px 16px;
    padding: 0 0 4px 9px;
}

/* toolbar */
.toolbar {
    display: flex;
    flex: none;
    align-items: center;
    height: 38px;
    padding-top: 3px;
    overflow: hidden;
}
.tool {
    display: flex;
    flex: none;
    align-items: center;
    justify-content: center;
    width: 28px;
    height: 28px;
}
.tool.cut-left {
    margin-left: -9px;
}
.tool.active {
    background: linear-gradient(#f6d27a, #fde08a);
    border: 1px solid #c8a040;
    border-radius: 3px;
}
.icon {
    width: 24px;
    height: 24px;
}
.sep {
    flex: none;
    width: 8px;
    height: 18px;
    background: linear-gradient(#d8dadd, #d8dadd) center / 1px 100% no-repeat;
}
.grip {
    flex: none;
    width: 12px;
    height: 22px;
    background: repeating-linear-gradient(#b8bcc8 0 2px, transparent 2px 5px) 6px 0 / 2px 100% no-repeat;
}
.split {
    display: flex;
    flex: none;
    align-items: center;
    gap: 3px;
    width: 41px;
    padding-left: 4px;
}
.frame {
    width: 25px;
    height: 24px;
    padding: 2px 0 0 3px;
    border: solid #d8d8d8;
    border-width: 1px 0 0 1px;
}
.frame.plain {
    border-color: transparent;
}
.icon-sec {
    width: 20px;
    height: 20px;
}

/* structure browser */
.work {
    display: flex;
    flex: 1;
    gap: 4px;
    min-height: 0;
    border-bottom: 1px solid #c8c8c8;
}
.browser {
    display: flex;
    flex-direction: column;
    flex: none;
    width: 340px;
    border: solid #c0c3c8;
    border-width: 1px 1px 0 0;
}
.browser-title {
    display: flex;
    align-items: center;
    gap: 9px;
    height: 18px;
    padding-right: 5px;
}
.browser-title h2 {
    flex: 1;
    margin-left: -1px;
    font-size: 13px;
    font-weight: 400;
    color: #444;
}
.pin {
    width: 10px;
    height: 10px;
}
.close {
    width: 8px;
    height: 8px;
}
.tabs {
    height: 29px;
    padding-top: 5px;
    border-bottom: 1px solid #c0c3c8;
}
.tab {
    display: block;
    width: 5px;
    height: 24px;
    background: #fff linear-gradient(#0a0, #0a0) 0 17px / 1px 2px no-repeat;
    border: solid #c0c3c8;
    border-width: 1px 1px 0 0;
    border-radius: 0 2px 0 0;
}
.view-bar {
    display: flex;
    align-items: center;
    gap: 5px;
    height: 23px;
    padding: 0 5px 0 8px;
    border-bottom: 1px solid #c0c3c8;
    font-size: 13px;
}
.view-bar span:first-child {
    flex: 1;
}
.find {
    width: 12px;
    height: 12px;
}
.bar-sep {
    width: 1px;
    height: 12px;
    background: #ddd;
}
.tree {
    flex: 1;
    background: #fff;
}
.root {
    height: 20px;
    padding-top: 4px;
}
.root svg {
    width: 18px;
    height: 12px;
}
.tree ul {
    margin-left: 13px;
    background: linear-gradient(#fff, #fff) 0 100% / 1px 9px no-repeat, repeating-linear-gradient(#999 0 1px, #fff 1px 2px) 0 0 / 1px 100% no-repeat;
}
.tree li {
    display: flex;
    align-items: center;
    height: 20px;
    padding-left: 14px;
    background: repeating-linear-gradient(90deg, #999 0 1px, transparent 1px 2px) 0 10px / 11px 1px no-repeat;
}
.tree input {
    appearance: none;
    width: 12px;
    height: 12px;
    margin: 0 9px 0 0;
    border: solid #555;
    border-width: 1px 0 0 1px;
    box-shadow: inset 1px 1px #888, 1px 1px #ddd;
}
.tree input:checked::before {
    content: "";
    display: block;
    width: 4px;
    height: 7px;
    margin: 1px 0 0 4px;
    border: solid #000;
    border-width: 0 2px 2px 0;
    transform: rotate(40deg);
}
.node {
    width: 24px;
    height: 16px;
    margin-right: 4px;
}
.tree label {
    padding: 0 2px;
    line-height: 16px;
}
.tree .current {
    padding-right: 3px;
    font-weight: 700;
    color: #000;
    border-bottom: 1px solid #0e0;
}

/* 3D view */
.viewport {
    position: relative;
    flex: 1;
    min-width: 0;
    overflow: hidden;
    background: linear-gradient(#bfbfbf, #fefefe);
    border-left: 1px solid #c0c3c8;
}
.scene {
    width: 100%;
    height: 100%;
}
.plane-band {
    fill: rgba(117, 229, 191, .5);
}
.plane-fill {
    fill: rgba(150, 238, 205, .18);
}
.plane-edge {
    fill: none;
    stroke: #3aa888;
    stroke-width: 2;
}
.axis {
    fill: none;
    stroke: #ff9090;
}
.axis.dots {
    stroke: #f04040;
    stroke-dasharray: 2 2;
}
.guide {
    fill: none;
    stroke: #f00000;
    stroke-width: 2;
    stroke-dasharray: 2 1;
    vector-effect: non-scaling-stroke;
}
.spine {
    fill: none;
    stroke: #000;
}
.track {
    fill: none;
    stroke: #ffb080;
    stroke-width: 4;
    stroke-linecap: round;
}
.profile-edge {
    fill: none;
    stroke: #108890;
    stroke-width: 4;
}
.profile {
    fill: none;
    stroke: #00f8f8;
    stroke-width: 2;
}
.pick {
    fill: #ffb080;
    stroke: #00b8c0;
}
.plane-name {
    font: italic 300 17px "Liberation Mono", "Noto Sans CJK SC", monospace;
    fill: #000;
}

/* sweep dialog */
.dialog {
    position: absolute;
    left: 1px;
    top: 1px;
    width: 204px;
    padding: 1px 2px 3px 3px;
    background: #edeff2;
    border: 1px solid #8e94a0;
    border-width: 1px 2px 2px 1px;
    color: #000;
}
.dialog-title {
    display: flex;
    align-items: center;
    justify-content: space-between;
    height: 25px;
    padding: 2px 4px 0 2px;
}
.dialog-title h3 {
    font-size: 14px;
    font-weight: 700;
    color: #444;
}
.dialog-body {
    display: flex;
    flex-direction: column;
    gap: 5px;
    padding: 5px;
    background: #c6cacd;
    border: 1px solid #a8acb0;
}
.panel {
    background: #edeff2;
    border: 1px solid #fbfbfb;
}
.actions {
    display: flex;
    align-items: center;
    justify-content: space-around;
    height: 31px;
    padding: 0 10px;
}
.actions svg {
    width: 18px;
    height: 18px;
}
.fields {
    padding: 1px 1px 1px 3px;
}
.row {
    display: flex;
    align-items: center;
    justify-content: space-between;
    height: 26px;
}
.row label {
    display: flex;
    align-items: center;
    gap: 3px;
    white-space: nowrap;
}
.row input[type="radio"], .row input[type="checkbox"] {
    appearance: none;
    width: 13px;
    height: 13px;
    margin: 0;
    background: #fff;
    border: 1px solid #333;
}
.row input[type="radio"] {
    border-radius: 50%;
}
.row input[type="radio"]:checked {
    background: radial-gradient(#222 0 3px, #fff 4px);
}
.row input[type="checkbox"]:checked::before {
    content: "";
    display: block;
    width: 4px;
    height: 8px;
    margin: 0 0 0 4px;
    border: solid #222;
    border-width: 0 1px 1px 0;
    transform: rotate(40deg);
}
.row input[type="text"] {
    width: 90px;
    height: 25px;
    padding: 0 3px;
    font: inherit;
    color: #000;
    background: #fff;
    border: 1px solid #7a7a7a;
}
.row input.scrolled {
    text-indent: -3px;
}
.row input[type="text"]:disabled {
    background: #f0f0f0;
}
.combo {
    position: relative;
    display: flex;
    width: 90px;
    height: 25px;
    border: 1px solid #0078d7;
    background: #fff;
}
.combo select {
    flex: 1;
    min-width: 0;
    appearance: none;
    padding: 0 3px;
    font: inherit;
    color: #000;
    background: none;
    border: 0;
}
.combo-arrow {
    display: flex;
    align-items: center;
    justify-content: center;
    width: 16px;
    background: #cce4f7;
    border-left: 1px solid #005499;
}
.combo-arrow svg {
    width: 8px;
    height: 5px;
}
.options {
    position: absolute;
    left: -1px;
    top: 23px;
    z-index: 1;
    width: 90px;
    background: #fff;
    border: 1px solid #0078d7;
    box-shadow: 2px 2px 3px rgba(0, 0, 0, .5);
}
.options li {
    padding-left: 2px;
    line-height: 19px;
}
.options .hover {
    color: #fff;
    background: #0078d7;
}
.footer {
    padding: 2px;
}
.footer button {
    display: block;
    width: 88px;
    height: 23px;
    padding-left: 3px;
    text-align: left;
    background: #e1e1e1;
    border: 1px solid #adadad;
}

/* community logo */
.logo {
    position: absolute;
    right: 4px;
    bottom: 1px;
    width: 160px;
    height: 70px;
    overflow: visible;
}
.logo-char {
    font: 700 59px "Noto Sans CJK SC", sans-serif;
    fill: #0068b7;
}
.logo-line {
    fill: none;
    stroke: #0068b7;
    stroke-width: 8;
    stroke-linecap: round;
}
.logo-plus {
    stroke: #f39800;
    stroke-width: 8;
    stroke-linecap: round;
}
.logo-tag {
    font: 700 20px "Noto Sans CJK SC", sans-serif;
    fill: #fff;
}
.logo-url {
    font: 700 11px "Open Sans", sans-serif;
    fill: #0068b7;
}
```
